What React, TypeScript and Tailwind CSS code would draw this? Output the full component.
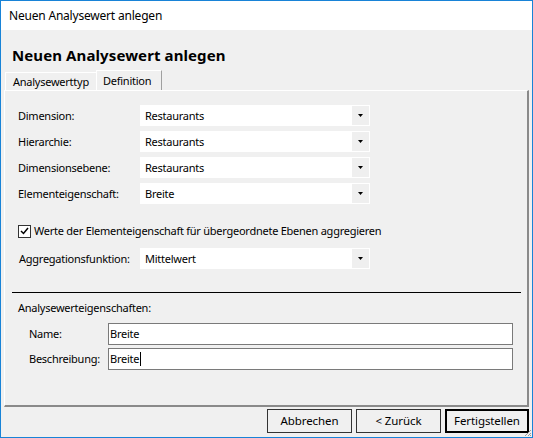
import React from 'react'

const font = { fontFamily: '"Noto Sans", "Liberation Sans", sans-serif' }

function Arrow() {
  return (
    <svg width="5" height="3" viewBox="0 0 5 3">
      <path d="M0 0 H5 L2.5 3 Z" fill="#000" />
    </svg>
  )
}

function Combo({ value }: { value: string }) {
  return (
    <div className="flex h-[21px] w-[230px] border border-white bg-white">
      <div className="flex flex-1 items-center pl-[4px] text-black">{value}</div>
      <div className="flex w-[17px] items-center justify-center bg-[#efefef]">
        <Arrow />
      </div>
    </div>
  )
}

function ComboRow({ label, value }: { label: string; value: string }) {
  return (
    <div className="flex items-center">
      <div className="w-[122px] text-black">{label}</div>
      <Combo value={value} />
    </div>
  )
}

function TextRow({ label, value, caret }: { label: string; value: string; caret?: boolean }) {
  return (
    <div className="flex items-center">
      <div className="w-[90px] pl-[11px] text-black">{label}</div>
      <div className="flex h-[22px] w-[405px] items-center border border-[#7a7a7a] bg-white pl-[1px] text-black">
        {value}
        {caret && <span className="ml-[1px] h-[14px] w-px bg-black" />}
      </div>
    </div>
  )
}

function Button({ label, primary }: { label: string; primary?: boolean }) {
  return (
    <div
      className={
        'flex h-[24px] items-center justify-center bg-[#f0f0f0] text-[11.5px] tracking-[-0.1px] text-black ' +
        (primary ? 'w-[84px] border-2 border-black' : 'w-[85px] border border-[#333]')
      }
    >
      {label}
    </div>
  )
}

export default function App() {
  return (
    <div
      style={font}
      className="relative flex h-[438px] w-[533px] flex-col border border-[#1883d7] bg-[#f0f0f0] text-[11px] leading-[16px] tracking-[-0.25px]"
    >
      <div className="flex h-[29px] items-center bg-white pl-[8px] text-[12px] tracking-[-0.2px] text-black">
        Neuen Analysewert anlegen
      </div>

      <div className="pl-[11px] pt-[15px] text-[15px] font-bold leading-[20px] tracking-[0.1px] text-black">
        Neuen Analysewert anlegen
      </div>

      <div className="mt-[5px] flex h-[20px] items-end pl-[4px]">
        <div className="flex h-[18px] w-[91px] items-center border-l border-t border-white pl-[7px] text-black">
          Analysewerttyp
        </div>
        <div className="-mb-px flex h-[21px] w-[66px] items-center border-l border-t border-r border-white border-r-[#a0a0a0] bg-[#f0f0f0] pl-[6px] text-black">
          Definition
        </div>
      </div>

      <div className="mx-[3px] flex h-[317px] flex-col border-t border-l border-white border-r-2 border-b-2 border-r-[#8a8a8a] border-b-[#8a8a8a] pl-[13px] pt-[14px]">
        <div className="flex flex-col gap-[5px]">
          <ComboRow label="Dimension:" value="Restaurants" />
          <ComboRow label="Hierarchie:" value="Restaurants" />
          <ComboRow label="Dimensionsebene:" value="Restaurants" />
          <ComboRow label="Elementeigenschaft:" value="Breite" />
        </div>

        <div className="mt-[19px] flex items-center">
          <div className="flex h-[13px] w-[13px] items-center justify-center border border-[#333] bg-white">
            <svg width="9" height="8" viewBox="0 0 9 8">
              <path d="M1 4 L3.5 6.5 L8 1" stroke="#000" strokeWidth="1.5" fill="none" />
            </svg>
          </div>
          <div className="ml-[3px] text-black">
            Werte der Elementeigenschaft für übergeordnete Ebenen aggregieren
          </div>
        </div>

        <div className="mt-[9px] flex items-center pl-[1px]">
          <div className="w-[121px] text-black">Aggregationsfunktion:</div>
          <Combo value="Mittelwert" />
        </div>

        <div className="ml-[-6px] mt-[23px] h-px w-[509px] bg-black" />

        <div className="mt-[7px] text-black">Analysewerteigenschaften:</div>

        <div className="mt-[7px] flex flex-col gap-[3px]">
          <TextRow label="Name:" value="Breite" />
          <TextRow label="Beschreibung:" value="Breite" caret />
        </div>
      </div>

      <div className="mt-[2px] flex justify-end gap-[4px] pr-[3px]">
        <Button label="Abbrechen" />
        <Button label="< Zurück" />
        <Button label="Fertigstellen" primary />
      </div>

      <svg className="absolute bottom-0 right-0" width="8" height="8" viewBox="0 0 8 8">
        <path d="M7 1 L1 7 M7 4 L4 7 M7 6 L6 7" stroke="#9a9a9a" strokeWidth="1" />
      </svg>
    </div>
  )
}
